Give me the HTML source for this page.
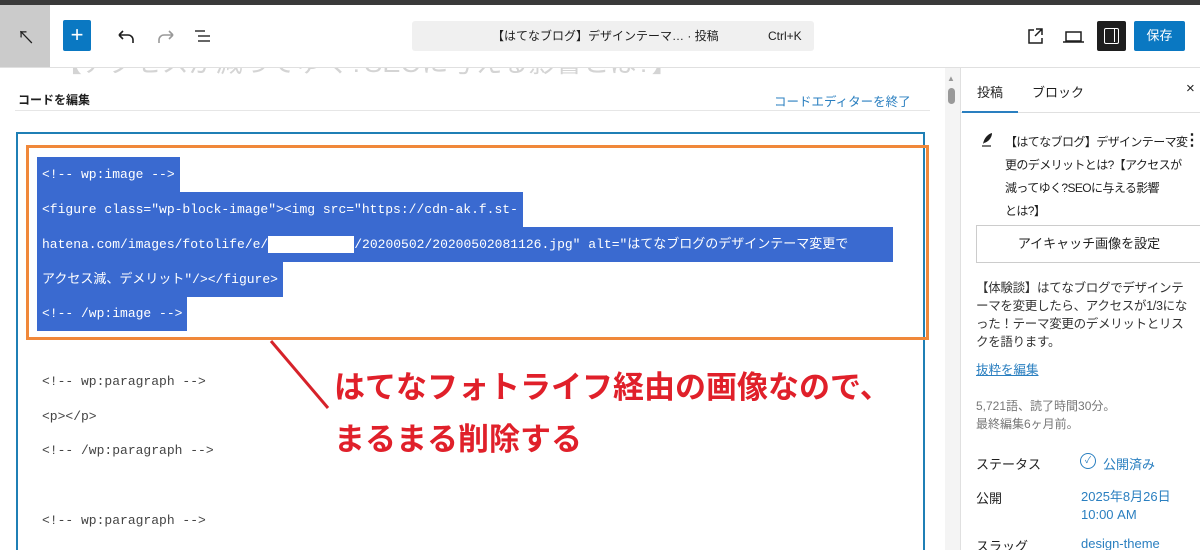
<!DOCTYPE html>
<html style="overflow:hidden"><head><meta charset="utf-8"><style>
*{margin:0;padding:0;box-sizing:border-box}
html,body{width:1200px;height:550px;overflow:hidden}
body{background:#fff;font-family:"Liberation Sans","Noto Sans CJK JP",sans-serif;position:relative;color:#1e1e1e}
.a{position:absolute;white-space:nowrap}
.mono{font-family:"Liberation Mono","Noto Sans CJK JP",monospace;font-size:13px}
.sel{background:#3a6ad0;color:#fff;position:absolute;left:37px;padding:0 5px;line-height:35px;height:35px}
.code{color:#444}
.sb{font-size:13px}
</style></head><body>
<!-- faded title behind header -->
<div class="a" style="left:55px;top:45px;font-size:27px;color:#d4d4d4;line-height:36px">【アクセスが減ってゆく?SEOに与える影響とは?】</div>
<div class="a" style="left:0;top:5px;width:1200px;height:62px;background:#fff"></div>
<div class="a" style="left:0;top:0;width:1200px;height:5px;background:#3a3a3a"></div>
<div class="a" style="left:0;top:5px;width:50px;height:62px;background:#cbcbcb"></div>
<div class="a" style="left:17px;top:24px;font-size:18px">↖</div>
<div class="a" style="left:63px;top:20px;width:28px;height:31px;background:#0a78c2;border-radius:2px;color:#fff;font-size:22px;text-align:center;line-height:30px">+</div>
<svg class="a" style="left:117px;top:28px" width="100" height="18" fill="none" stroke-width="1.6">
<path d="M2 7h9a5 5 0 0 1 5 5v3M2 7l4-4M2 7l4 4" stroke="#1e1e1e"/>
<path d="M56 7h-9a5 5 0 0 0-5 5v3M56 7l-4-4M56 7l-4 4" stroke="#999"/>
<path d="M78 3h10M81 8h12M81 13h12" stroke="#333"/>
</svg>
<div class="a" style="left:412px;top:21px;width:402px;height:30px;background:#f0f0f0;border-radius:3px;font-size:12px;line-height:30px"><span style="position:absolute;left:80px">【はてなブログ】デザインテーマ… · 投稿</span><span style="position:absolute;left:356px">Ctrl+K</span></div>
<svg class="a" style="left:1026px;top:27px" width="60" height="18" fill="none" stroke="#1e1e1e" stroke-width="1.5">
<path d="M8 3H3v13h13v-5M10 2h6v6M16 2l-7 7"/>
<path d="M40 5h15v9H40zM37 15h21"/>
</svg>
<div class="a" style="left:1097px;top:21px;width:29px;height:30px;background:#1e1e1e;border-radius:2px"></div>
<div class="a" style="left:1104px;top:28px;width:15px;height:16px;border:1.5px solid #fff;border-radius:2px"><div style="position:absolute;right:3px;top:0;width:1.5px;height:13px;background:#fff"></div></div>
<div class="a" style="left:1134px;top:21px;width:51px;height:30px;background:#0a78c2;border-radius:2px;color:#fff;font-size:13px;text-align:center;line-height:30px">保存</div>
<div class="a" style="left:0;top:67px;width:1200px;height:1px;background:#e0e0e0"></div>
<div class="a" style="left:18px;top:91px;font-size:12px;font-weight:bold">コードを編集</div>
<div class="a" style="left:774px;top:91px;font-size:12.5px;color:#2a7fc0">コードエディターを終了</div>
<div class="a" style="left:15px;top:110px;width:915px;height:1px;background:#e6e6e6"></div>
<div class="a" style="left:945px;top:68px;width:15px;height:482px;background:#f4f4f4"></div>
<div class="a" style="left:948px;top:88px;width:7px;height:16px;background:#999;border-radius:4px"></div>
<div class="a" style="left:947px;top:74px;font-size:8px;color:#999">▲</div>
<!-- sidebar -->
<div class="a" style="left:960px;top:68px;width:1px;height:482px;background:#e0e0e0"></div>
<div class="a sb" style="left:977px;top:82px">投稿</div>
<div class="a sb" style="left:1032px;top:82px">ブロック</div>
<div class="a" style="left:1186px;top:80px;font-size:15px">×</div>
<div class="a" style="left:961px;top:112px;width:239px;height:1px;background:#e0e0e0"></div>
<div class="a" style="left:962px;top:111px;width:56px;height:2px;background:#2a7fc0"></div>
<svg class="a" style="left:980px;top:132px" width="14" height="16"><path d="M3 12C4 6 8 2 12 1C12 6 8 10 4 11Z" fill="#1e1e1e"/><path d="M2 14h9" stroke="#1e1e1e" stroke-width="1.2"/></svg>
<div class="a" style="left:1005px;top:131px;line-height:23px;font-size:12px;letter-spacing:-0.6px">【はてなブログ】デザインテーマ変<br>更のデメリットとは?【アクセスが<br>減ってゆく?SEOに与える影響<br>とは?】</div>
<div class="a" style="left:1184px;top:130px;font-size:16px;font-weight:bold">⋮</div>
<div class="a" style="left:976px;top:225px;width:226px;height:38px;border:1px solid #ccc;font-size:13px;text-align:center;line-height:36px">アイキャッチ画像を設定</div>
<div class="a" style="left:976px;top:279px;line-height:18px;color:#333;font-size:12.5px;letter-spacing:-0.3px">【体験談】はてなブログでデザインテ<br>ーマを変更したら、アクセスが1/3にな<br>った！テーマ変更のデメリットとリス<br>クを語ります。</div>
<div class="a" style="left:976px;top:359px;font-size:12.5px;color:#2a7fc0;text-decoration:underline">抜粋を編集</div>
<div class="a" style="left:976px;top:397px;font-size:12px;color:#777;line-height:18px">5,721語、読了時間30分。<br>最終編集6ヶ月前。</div>
<div class="a sb" style="left:976px;top:454px">ステータス</div>
<div class="a" style="left:1080px;top:453px;width:16px;height:16px;border:1.5px solid #2a7fc0;border-radius:50%;color:#2a7fc0;font-size:9px;text-align:center;line-height:13px">✓</div>
<div class="a sb" style="left:1103px;top:454px;color:#2a7fc0">公開済み</div>
<div class="a sb" style="left:976px;top:488px">公開</div>
<div class="a sb" style="left:1081px;top:488px;color:#2a7fc0;line-height:18px">2025年8月26日<br>10:00 AM</div>
<div class="a sb" style="left:976px;top:536px">スラッグ</div>
<div class="a sb" style="left:1081px;top:536px;color:#2a7fc0">design-theme</div>
<!-- code box -->
<div class="a" style="left:16px;top:132px;width:909px;height:418px;border:2px solid #1f7fb5;border-bottom:none"></div>
<div class="a mono sel" style="top:157px">&lt;!-- wp:image --&gt;</div>
<div class="a mono sel" style="top:192px">&lt;figure class="wp-block-image"&gt;&lt;img src="https://cdn-ak.f.st-</div>
<div class="a mono sel" style="top:227px;width:856px">hatena.com/images/fotolife/e/<span style="display:inline-block;width:86px;height:17px;background:#fff;vertical-align:middle"></span>/20200502/20200502081126.jpg" alt="はてなブログのデザインテーマ変更で</div>
<div class="a mono sel" style="top:262px">アクセス減、デメリット"/&gt;&lt;/figure&gt;</div>
<div class="a mono sel" style="top:296px">&lt;!-- /wp:image --&gt;</div>
<div class="a" style="left:26px;top:145px;width:903px;height:195px;border:3px solid #f0883a"></div>
<div class="a mono code" style="left:42px;top:374px">&lt;!-- wp:paragraph --&gt;</div>
<div class="a mono code" style="left:42px;top:409px">&lt;p&gt;&lt;/p&gt;</div>
<div class="a mono code" style="left:42px;top:443px">&lt;!-- /wp:paragraph --&gt;</div>
<div class="a mono code" style="left:42px;top:513px">&lt;!-- wp:paragraph --&gt;</div>
<svg class="a" style="left:0;top:0" width="400" height="420"><path d="M271 341L328 408" stroke="#d6222a" stroke-width="3"/></svg>
<div class="a" style="left:334px;top:368px;font-size:31px;font-weight:bold;color:#e0202a;line-height:40px">はてなフォトライフ経由の画像なので、<br><span style="position:relative;top:12px">まるまる削除する</span></div>
</body></html>
